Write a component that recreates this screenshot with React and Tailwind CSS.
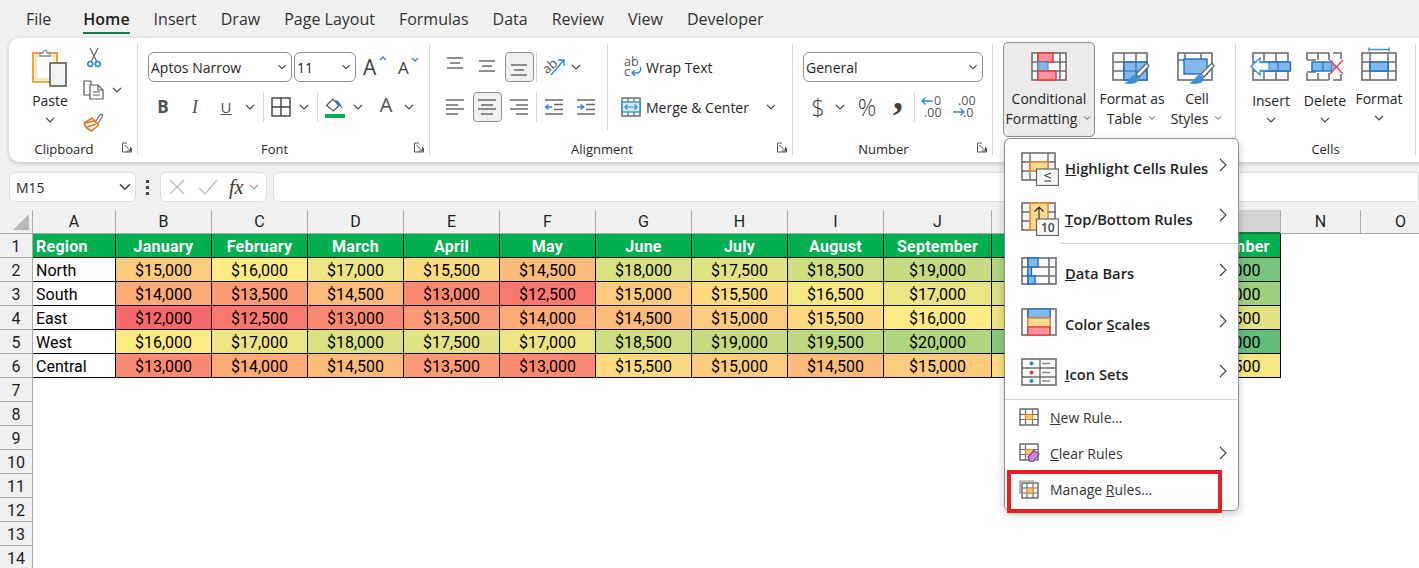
import React from "react";

const TABS = ["File", "Home", "Insert", "Draw", "Page Layout", "Formulas", "Data", "Review", "View", "Developer"];

const COLUMNS = [
  { id: "A", cls: "w-[83px]" },
  { id: "B", cls: "w-[96px]" },
  { id: "C", cls: "w-[96px]" },
  { id: "D", cls: "w-[96px]" },
  { id: "E", cls: "w-[96px]" },
  { id: "F", cls: "w-[96px]" },
  { id: "G", cls: "w-[96px]" },
  { id: "H", cls: "w-[96px]" },
  { id: "I", cls: "w-[96px]" },
  { id: "J", cls: "w-[108px]" },
  { id: "K", cls: "w-[96px]" },
  { id: "L", cls: "w-[96px]" },
  { id: "M", cls: "w-[97px]" },
  { id: "N", cls: "w-[80px]" },
  { id: "O", cls: "w-[80px]" },
];

const HEADERS = ["Region", "January", "February", "March", "April", "May", "June", "July", "August", "September", "October", "November", "December"];

const ROWS = [
  ["North", 15000, 16000, 17000, 15500, 14500, 18000, 17500, 18500, 19000, 20000, 21500, 23000],
  ["South", 14000, 13500, 14500, 13000, 12500, 15000, 15500, 16500, 17000, 18000, 19500, 21000],
  ["East", 12000, 12500, 13000, 13500, 14000, 14500, 15000, 15500, 16000, 17000, 16500, 17500],
  ["West", 16000, 17000, 18000, 17500, 17000, 18500, 19000, 19500, 20000, 22000, 23500, 24000],
  ["Central", 13000, 14000, 14500, 13500, 13000, 15500, 15000, 14500, 15000, 15500, 16000, 16500],
];

// three colour scale, same stops as the sheet: 12000 red, 16000 yellow, 24000 green
function scaleColor(v) {
  const low = [248, 105, 107], mid = [255, 235, 132], high = [99, 190, 123];
  const [a, b, t] = v <= 16000 ? [low, mid, (v - 12000) / 4000] : [mid, high, (v - 16000) / 8000];
  return `rgb(${a.map((c, i) => Math.round(c + (b[i] - c) * t)).join(",")})`;
}

const GRAY = "#6e6e6e";

function Chevron({ className = "" }) {
  return (
    <svg className={`shrink-0 ${className}`} width="10" height="6" viewBox="0 0 10 6" fill="none" stroke="#404040" strokeWidth="1.2">
      <polyline points="1,0.8 5,4.8 9,0.8" />
    </svg>
  );
}

function Launcher() {
  return (
    <svg width="11" height="11" viewBox="0 0 11 11" fill="none" stroke="#555" strokeWidth="1">
      <polyline points="5,1 0.5,1 0.5,10 9.5,10 9.5,6" />
      <polyline points="2.5,3 8.5,9" />
      <polyline points="4.5,9 8.5,9 8.5,5" />
    </svg>
  );
}

function Grid({ w = 36, h = 29, xs = [], ys = [], children }) {
  return (
    <svg width={w} height={h} viewBox={`0 0 ${w} ${h}`} fill="none" className="shrink-0">
      <rect x="1" y="1" width={w - 2} height={h - 2} fill="#fafafa" stroke={GRAY} strokeWidth="1.6" />
      {xs.map(x => <line key={x} x1={x} x2={x} y1="1" y2={h - 1} stroke={GRAY} strokeWidth="1.6" />)}
      {ys.map(y => <line key={y} y1={y} y2={y} x1="1" x2={w - 1} stroke={GRAY} strokeWidth="1.6" />)}
      {children}
    </svg>
  );
}

function Brush() {
  return (
    <g>
      <path d="M37 14 L27 25 L24 22 L35 11 Z" fill="#fff" stroke="#666" strokeWidth="1.3" />
      <path d="M23 23 C18 23 19 29 12 31 C18 33 27 32 27 26 Z" fill="#3d8fd6" />
    </g>
  );
}

function CfIcon() {
  return (
    <Grid w={36} h={29} xs={[7, 29]} ys={[10, 19]}>
      <rect x="7" y="1" width="15" height="9" fill="#ff919b" stroke="#e03c3c" strokeWidth="1.5" />
      <rect x="7" y="10" width="10" height="9" fill="#84b8ea" stroke="#3c86d0" strokeWidth="1" />
      <rect x="7" y="19" width="18" height="9" fill="#ff919b" stroke="#e03c3c" strokeWidth="1.5" />
    </Grid>
  );
}

function FormatTableIcon() {
  return (
    <svg width="40" height="34" viewBox="0 0 40 34" fill="none">
      <rect x="1" y="1" width="34" height="27" fill="#fafafa" stroke={GRAY} strokeWidth="1.6" />
      <path d="M12 1V28M24 1V28M1 10H35M1 19H35" stroke={GRAY} strokeWidth="1.5" />
      <rect x="12" y="10" width="23" height="18" fill="#84b8ea" stroke="#1b6ec2" strokeWidth="1.4" />
      <path d="M24 10V28M12 19H35" stroke="#1b6ec2" strokeWidth="1" />
      <Brush />
    </svg>
  );
}

function CellStylesIcon() {
  return (
    <svg width="40" height="34" viewBox="0 0 40 34" fill="none">
      <rect x="1" y="1" width="34" height="27" fill="#fafafa" stroke={GRAY} strokeWidth="1.6" />
      <path d="M8 1V8M24 1V8M1 8H8" stroke={GRAY} strokeWidth="1.5" />
      <rect x="7" y="7" width="23" height="15" fill="#84b8ea" stroke="#1b6ec2" strokeWidth="1.4" />
      <Brush />
    </svg>
  );
}

function InsertIcon() {
  return (
    <svg width="42" height="29" viewBox="0 0 42 29" fill="none">
      <rect x="3" y="1" width="35" height="27" fill="#fafafa" stroke={GRAY} strokeWidth="1.6" />
      <path d="M14 1V28M26 1V28M3 10H38M3 19H38" stroke={GRAY} strokeWidth="1.5" />
      <rect x="16" y="10" width="24.5" height="9" fill="#84b8ea" stroke="#1b6ec2" strokeWidth="1.4" />
      <line x1="28" x2="28" y1="10" y2="19" stroke="#1b6ec2" />
      <path d="M1 14.5 L10 6 V10.5 H19 V18.5 H10 V23 Z" fill="#fff" stroke="#3c96d8" strokeWidth="1.3" />
    </svg>
  );
}

function DeleteIcon() {
  return (
    <svg width="38" height="29" viewBox="0 0 38 29" fill="none">
      <path d="M1 8V1H23M1 21V28H23M12 1V8M12 21V28M1 8H10M1 20H10M23 1V8M23 21V28M27 1H35V7M27 28H35V22" stroke={GRAY} strokeWidth="1.6" />
      <rect x="6" y="10" width="20" height="9" fill="#84b8ea" stroke="#1b6ec2" strokeWidth="1.4" />
      <line x1="17" x2="17" y1="10" y2="19" stroke="#1b6ec2" />
      <path d="M26 9.5 L31 14.5 L26 19.5" fill="#84b8ea" />
      <path d="M24 8 L37 22M37 8 L24 22" stroke="#ee4b4b" strokeWidth="1.6" />
    </svg>
  );
}

function FormatIcon() {
  return (
    <svg width="36" height="35" viewBox="0 0 36 35" fill="none">
      <path d="M8 1.5V5.5M8 3.5H28M28 1.5V5.5" stroke="#3c96d8" strokeWidth="1.4" />
      <rect x="1" y="7" width="34" height="27" fill="#fafafa" stroke={GRAY} strokeWidth="1.6" />
      <path d="M9 7V34M27 7V34M1 16H35M1 25H35" stroke={GRAY} strokeWidth="1.5" />
      <rect x="9" y="16" width="18" height="9" fill="#84b8ea" stroke="#1b6ec2" strokeWidth="1.4" />
    </svg>
  );
}

function PasteIcon() {
  return (
    <svg width="36" height="40" viewBox="0 0 36 40" fill="none">
      <rect x="1" y="5" width="24" height="29" fill="#fff8ea" stroke="#f0a040" strokeWidth="2" />
      <path d="M4 8H22V31H4Z" fill="#fff" stroke="#fbd9a5" strokeWidth="1.5" />
      <path d="M8 8V5H11C11 1.5 15 1.5 15 5H18V8Z" fill="#fff" stroke="#8a8a8a" strokeWidth="1.3" />
      <rect x="18" y="15" width="16" height="23" fill="#f3f3f3" stroke="#4f4f4f" strokeWidth="1.5" />
    </svg>
  );
}

function CutIcon() {
  return (
    <svg width="14" height="21" viewBox="0 0 14 21" fill="none">
      <path d="M3 1 L9.5 14M11 1 L4.5 14" stroke="#555" strokeWidth="1.1" />
      <circle cx="3.3" cy="17" r="2.5" stroke="#2b88d8" strokeWidth="1.6" />
      <circle cx="10.7" cy="17" r="2.5" stroke="#2b88d8" strokeWidth="1.6" />
    </svg>
  );
}

function CopyIcon() {
  return (
    <svg width="21" height="20" viewBox="0 0 21 20" fill="none" stroke="#5c5c5c" strokeWidth="1.2">
      <path d="M1 1H8V15H1Z" fill="#fff" />
      <path d="M7 5H15L20 10V19H7Z" fill="#fff" />
      <path d="M15 5V10H20M10 12H17M10 15H17" />
    </svg>
  );
}

function PainterIcon() {
  return (
    <svg width="21" height="20" viewBox="0 0 21 20" fill="none">
      <path d="M12 10 L17 3 C18 1.5 20.5 3 19.5 4.5 L14.5 12" fill="#fff" stroke="#6b6b6b" strokeWidth="1.2" />
      <path d="M9 6 L15.5 13 L9 19 C6 18 2 15 1 11 Z" fill="#fff" stroke="#e5761d" strokeWidth="1.5" />
      <path d="M2 11 L11 9M4 15 L13 12" stroke="#e5761d" strokeWidth="1.4" />
    </svg>
  );
}

function Bars({ lines, w = 18, h = 14, color = "#5f5f5f" }) {
  return (
    <svg width={w} height={h} viewBox={`0 0 ${w} ${h}`} fill="none" stroke={color} strokeWidth="1.4" className="shrink-0">
      {lines.map(([x1, x2, y]) => <line key={y} x1={x1} x2={x2} y1={y} y2={y} />)}
    </svg>
  );
}

function Indent({ right }) {
  return (
    <svg width="18" height="16" viewBox="0 0 18 16" fill="none">
      <path d="M0 1H18M0 15H18M9 5.5H18M9 10.5H18" stroke="#6a6a6a" strokeWidth="1.4" />
      <path d={right ? "M0 8H6M3.5 5.5L6.5 8L3.5 10.5" : "M7 8H1M3.5 5.5L0.5 8L3.5 10.5"} stroke="#2b88d8" strokeWidth="1.5" />
    </svg>
  );
}

function OrientIcon() {
  return (
    <svg className="overflow-visible" width="21" height="20" viewBox="0 0 21 20" fill="none">
      <text x="-2" y="13" fontSize="13" fontFamily="Open Sans" fill="#555" transform="rotate(-42 6 10)">ab</text>
      <path d="M6 18 L19 3M13 3H19V9" stroke="#2b88d8" strokeWidth="1.4" />
    </svg>
  );
}

function WrapIcon() {
  return (
    <svg className="overflow-visible" width="18" height="20" viewBox="0 0 18 20" fill="none">
      <text x="0" y="9" fontSize="12.5" fontFamily="Open Sans" fill="#555">ab</text>
      <text x="0" y="19" fontSize="12.5" fontFamily="Open Sans" fill="#555">c</text>
      <path d="M16 10 C18 12 16 16 13 16 H8M11 13 L8 16 L11 19" stroke="#2b88d8" strokeWidth="1.3" />
    </svg>
  );
}

function MergeIcon() {
  return (
    <svg width="20" height="20" viewBox="0 0 20 20" fill="none">
      <rect x="1" y="1" width="18" height="18" fill="#fff" stroke={GRAY} strokeWidth="1.5" />
      <path d="M7 1V5M13 1V5M7 15V19M13 15V19" stroke={GRAY} strokeWidth="1.3" />
      <rect x="1" y="5" width="18" height="10" fill="#d6e8f8" stroke="#2b88d8" strokeWidth="1.3" />
      <path d="M4 10H16M6.5 7.5L4 10L6.5 12.5M13.5 7.5L16 10L13.5 12.5" stroke="#2b88d8" strokeWidth="1.2" />
    </svg>
  );
}

function BordersIcon() {
  return (
    <svg width="20" height="20" viewBox="0 0 20 20" fill="none" stroke="#3f3f3f" strokeWidth="1.4">
      <rect x="1" y="1" width="18" height="18" />
      <path d="M10 1V19M1 10H19" />
    </svg>
  );
}

function FillIcon() {
  return (
    <svg width="20" height="21" viewBox="0 0 20 21" fill="none">
      <path d="M1.5 8.5 L8 2 L14 8.5 L8.5 14 Z" fill="#fff" stroke="#555" strokeWidth="1.2" />
      <path d="M10 3 C13 3 15 6 16 8 C17 10 18 11 17.5 12 L15 9 L13 8Z" fill="#2b6fb5" />
      <rect x="0" y="17" width="20" height="4" fill="#00b050" />
    </svg>
  );
}

function DecimalIcon({ more }) {
  return (
    <svg className="overflow-visible" width="22" height="24" viewBox="0 0 22 24" fill="none">
      <text x={more ? 13 : 5} y="10" fontSize="12.5" fontFamily="Open Sans" fill="#555">{more ? "0" : ".00"}</text>
      <text x={more ? 3 : 10} y="22" fontSize="12.5" fontFamily="Open Sans" fill="#555">{more ? ".00" : ".0"}</text>
      <path d={more ? "M1 6H12M4.5 2.5L1 6L4.5 9.5" : "M0 17H11M7.5 13.5L11 17L7.5 20.5"} stroke="#2b88d8" strokeWidth="1.3" />
    </svg>
  );
}

// menu icons
function HighlightIcon() {
  return (
    <svg width="38" height="34" viewBox="0 0 38 34" fill="none">
      <rect x="1" y="1" width="33" height="27" fill="#fafafa" stroke={GRAY} strokeWidth="1.6" />
      <path d="M9 1V28M27 1V28M1 10H35M1 19H35" stroke={GRAY} strokeWidth="1.4" />
      <rect x="9" y="10" width="18" height="9" fill="#fbd98f" stroke="#e8862d" strokeWidth="1.5" />
      <rect x="15.5" y="17" width="22" height="16.5" fill="#f7f7f7" stroke="#666" strokeWidth="1.2" />
      <path d="M30 21 L23.5 23.5 L30 26M23.5 29H30" stroke="#333" strokeWidth="1" />
    </svg>
  );
}

function TopBottomIcon() {
  return (
    <svg width="38" height="34" viewBox="0 0 38 34" fill="none">
      <rect x="1" y="1" width="33" height="27" fill="#fafafa" stroke={GRAY} strokeWidth="1.6" />
      <path d="M1 10H35M1 19H35" stroke={GRAY} strokeWidth="1.4" />
      <rect x="9" y="1" width="18" height="27" fill="#fbd98f" stroke="#e8862d" strokeWidth="1.5" />
      <path d="M18 17V5M13.5 9.5L18 5L22.5 9.5" stroke="#333" strokeWidth="1.2" />
      <rect x="15.5" y="17" width="22" height="16.5" fill="#f7f7f7" stroke="#666" strokeWidth="1.2" />
      <text x="20" y="30" fontSize="12" fontFamily="Open Sans" fill="#444">10</text>
    </svg>
  );
}

function DataBarsIcon() {
  return (
    <Grid w={36} h={28} xs={[7, 28]} ys={[10, 19]}>
      <rect x="7" y="1" width="10" height="9" fill="#84b8ea" stroke="#1b6ec2" strokeWidth="1.4" />
      <rect x="7" y="10" width="3.5" height="9" fill="#84b8ea" stroke="#1b6ec2" strokeWidth="1.2" />
      <rect x="7" y="19" width="7" height="8" fill="#84b8ea" stroke="#1b6ec2" strokeWidth="1.4" />
    </Grid>
  );
}

function ColorScalesIcon() {
  return (
    <Grid w={36} h={28}>
      <path d="M7 1V27M29 1V27" stroke={GRAY} strokeWidth="1.4" />
      <rect x="7" y="1" width="22" height="9" fill="#84b8ea" stroke="#1b6ec2" strokeWidth="1.3" />
      <rect x="7" y="10" width="22" height="9" fill="#fbd98f" stroke="#e8862d" strokeWidth="1.3" />
      <rect x="7" y="19" width="22" height="8" fill="#ff919b" stroke="#e03c3c" strokeWidth="1.3" />
    </Grid>
  );
}

function IconSetsIcon() {
  return (
    <Grid w={36} h={28} ys={[10, 19]}>
      <path d="M19 1V27" stroke={GRAY} strokeWidth="1.4" />
      <circle cx="10.5" cy="5.5" r="2" fill="#2b88d8" />
      <circle cx="10.5" cy="14.5" r="2" fill="#e8383c" />
      <circle cx="10.5" cy="23" r="2" fill="#2b88d8" />
      <path d="M21 5.5H29M21 14.5H29M21 23H29" stroke="#8a8a8a" strokeWidth="1.3" />
    </Grid>
  );
}

function NewRuleIcon() {
  return (
    <svg width="20" height="18" viewBox="0 0 20 18" fill="none">
      <rect x="1" y="1" width="18" height="16" fill="#fafafa" stroke={GRAY} strokeWidth="1.5" />
      <path d="M6.5 1V17M13.5 1V17M1 6.5H19M1 11.5H19" stroke={GRAY} strokeWidth="1.2" />
      <rect x="6.5" y="6.5" width="7" height="5" fill="#fbc66f" stroke="#e8862d" />
    </svg>
  );
}

function ClearRulesIcon() {
  return (
    <svg width="21" height="20" viewBox="0 0 21 20" fill="none">
      <rect x="1" y="1" width="18" height="16" fill="#fafafa" stroke={GRAY} strokeWidth="1.5" />
      <path d="M6.5 1V17M1 6.5H19M1 11.5H12" stroke={GRAY} strokeWidth="1.2" />
      <rect x="6.5" y="6.5" width="7" height="5" fill="#fbc66f" stroke="#e8862d" />
      <path d="M9 14 L15 7.5 L20 11 L14 18.5 H11 Z" fill="#c98bd6" stroke="#8e3aa5" strokeWidth="1.2" />
    </svg>
  );
}

function ManageRulesIcon() {
  return (
    <svg width="20" height="19" viewBox="0 0 20 19" fill="none">
      <path d="M1 14V1H15" stroke="#888" strokeWidth="1.2" />
      <rect x="3" y="3" width="16" height="15" fill="#fafafa" stroke={GRAY} strokeWidth="1.5" />
      <path d="M8 3V18M14 3V18M3 8H19M3 13H19" stroke={GRAY} strokeWidth="1.2" />
      <rect x="8" y="8" width="6" height="5" fill="#fbc66f" stroke="#e8862d" />
    </svg>
  );
}

function MenuArrow({ className = "" }) {
  return (
    <svg className={`ml-auto mr-[11px] shrink-0 ${className}`} width="8" height="14" viewBox="0 0 8 14" fill="none" stroke="#404040" strokeWidth="1.1">
      <polyline points="1,1 7,7 1,13" />
    </svg>
  );
}

function Group({ width, label, launcher = true, children }) {
  return (
    <section className={`${width} h-[111px] shrink-0 flex flex-col border-r border-[#d6d6d6]`}>
      <div className="h-[97px]">{children}</div>
      <div className="flex h-[14px] items-start">
        <div className="flex-1 text-center text-[13px] leading-[16px] text-[#262626]">{label}</div>
        {launcher && <div className="w-[18px] pl-[3px] pt-px shrink-0"><Launcher /></div>}
      </div>
    </section>
  );
}

function Dropdown({ width, text }) {
  return (
    <div className={`${width} h-[30px] shrink-0 flex items-center justify-between rounded-[6px] border border-[#8f8f8f] bg-white pl-[2px] pr-[4px] text-[14px] text-[#262626]`}>
      <span>{text}</span>
      <Chevron className="scale-90" />
    </div>
  );
}

function VSep({ className = "" }) {
  return <div className={`w-px h-[30px] shrink-0 bg-[#d6d6d6] ${className}`} />;
}

function Slot({ width, active, children }) {
  return (
    <div className={`${width} h-[30px] shrink-0 flex items-center justify-center`}>
      {active
        ? <div className="w-[29px] h-[30px] flex items-center justify-center rounded-[4px] border border-[#8f8f8f] bg-[#f0f0f0]">{children}</div>
        : children}
    </div>
  );
}

function BigButton({ width, icon, lines, active, arrowBelow, textTop = "mt-[8px]" }) {
  return (
    <div className={`${width} shrink-0 flex flex-col items-center text-[14px] leading-[19.5px] text-[#262626]
      ${active ? "h-[95px] -mt-[2px] pt-[9px] rounded-[5px] border border-[#8f8f8f] bg-[#ebebeb]" : "pt-[8px]"}`}>
      {icon}
      <div className={`${textTop} flex flex-col items-center whitespace-nowrap`}>
        {lines.map((l, i) => (
          <div key={l} className="flex items-center">
            {l}
            {i === lines.length - 1 && !arrowBelow && <Chevron className="ml-[5px] scale-75" />}
          </div>
        ))}
        {arrowBelow && <Chevron className="mt-[6px]" />}
      </div>
    </div>
  );
}

function Ribbon() {
  return (
    <div className="mx-[9px] w-[1420px] h-[124px] flex pt-[6px] rounded-l-[10px] bg-white shadow-[0_1px_4px_rgba(0,0,0,0.22)]">
      <Group width="w-[129px]" label="Clipboard">
        <div className="flex">
          <div className="ml-[17px] w-[48px] pt-[4px] flex flex-col items-center text-[14px] text-[#262626]">
            <PasteIcon />
            <div className="mt-[3px] leading-[20px]">Paste</div>
            <Chevron className="mt-[6px]" />
          </div>
          <div className="ml-[9px] pt-[3px] flex flex-col gap-[12px]">
            <div className="pl-[4px] h-[21px]"><CutIcon /></div>
            <div className="flex items-center h-[20px]"><CopyIcon /><Chevron className="ml-[8px]" /></div>
            <div className="h-[20px]"><PainterIcon /></div>
          </div>
        </div>
      </Group>

      <Group width="w-[292px]" label="Font">
        <div className="pt-[8px] flex flex-col gap-[10px]">
          <div className="flex items-center pl-[10px]">
            <Dropdown width="w-[144px]" text="Aptos Narrow" />
            <Dropdown width="w-[62px] ml-[2px]" text="11" />
            <div className="ml-[7px] relative w-[22px] text-[21px] leading-none text-[#404040]">
              A
              <svg className="absolute right-[-2px] top-[-1px]" width="8" height="5" viewBox="0 0 8 5" fill="none" stroke="#2b88d8" strokeWidth="1.3"><polyline points="1,4 4,1 7,4" /></svg>
            </div>
            <div className="ml-[13px] relative w-[18px] text-[17px] leading-none text-[#404040]">
              A
              <svg className="absolute right-[-3px] top-[-2px]" width="8" height="5" viewBox="0 0 8 5" fill="none" stroke="#2b88d8" strokeWidth="1.3"><polyline points="1,1 4,4 7,1" /></svg>
            </div>
          </div>
          <div className="flex items-center pl-[9px]">
            <Slot width="w-[32px]"><span className="text-[17px] font-bold text-[#505050]">B</span></Slot>
            <Slot width="w-[32px]"><span className="font-['Liberation_Serif',serif] text-[18px] italic text-[#505050]">I</span></Slot>
            <Slot width="w-[30px]"><span className="text-[15px] underline text-[#505050]">U</span></Slot>
            <Slot width="w-[18px]"><Chevron /></Slot>
            <VSep className="ml-[4px]" />
            <div className="ml-[7px]"><BordersIcon /></div>
            <Slot width="w-[18px] ml-[4px]"><Chevron /></Slot>
            <VSep className="ml-[4px]" />
            <div className="ml-[7px]"><FillIcon /></div>
            <Slot width="w-[18px] ml-[4px]"><Chevron /></Slot>
            <Slot width="w-[20px] ml-[9px]"><span className="text-[20px] text-[#505050] -mt-[4px]">A</span></Slot>
            <Slot width="w-[18px] ml-[4px]"><Chevron /></Slot>
          </div>
        </div>
      </Group>

      <Group width="w-[363px]" label="Alignment">
        <div className="flex">
          <div className="w-[178px] h-[86px] pt-[8px] pl-[9px] flex flex-col gap-[10px] border-r border-[#d6d6d6]">
            <div className="flex items-center">
              <Slot width="w-[32px]"><div className="-mt-[6px]"><Bars lines={[[1, 17, 1], [4, 14, 6], [1, 17, 11]]} /></div></Slot>
              <Slot width="w-[32px]"><Bars lines={[[1, 17, 1], [4, 14, 6], [1, 17, 11]]} /></Slot>
              <Slot width="w-[32px]" active><div className="mt-[8px]"><Bars lines={[[1, 17, 1], [4, 14, 6], [1, 17, 11]]} /></div></Slot>
              <VSep className="ml-[1px]" />
              <div className="ml-[8px]"><OrientIcon /></div>
              <Slot width="w-[18px] ml-[1px]"><Chevron /></Slot>
            </div>
            <div className="flex items-center">
              <Slot width="w-[32px]"><Bars h={16} lines={[[0, 18, 1], [0, 12, 6], [0, 18, 10], [0, 12, 15]]} /></Slot>
              <Slot width="w-[32px]" active><Bars h={16} lines={[[0, 18, 1], [3, 15, 6], [0, 18, 10], [3, 15, 15]]} /></Slot>
              <Slot width="w-[32px]"><Bars h={16} lines={[[0, 18, 1], [6, 18, 6], [0, 18, 10], [6, 18, 15]]} /></Slot>
              <VSep className="ml-[1px]" />
              <div className="ml-[8px]"><Indent /></div>
              <div className="ml-[14px]"><Indent right /></div>
            </div>
          </div>
          <div className="pt-[8px] pl-[13px] flex flex-col gap-[10px] text-[14px] text-[#262626]">
            <div className="h-[30px] flex items-center">
              <div className="w-[25px] pl-[3px]"><WrapIcon /></div>
              Wrap Text
            </div>
            <div className="h-[30px] flex items-center">
              <div className="w-[25px]"><MergeIcon /></div>
              Merge &amp; Center
              <Chevron className="ml-[17px]" />
            </div>
          </div>
        </div>
      </Group>

      <Group width="w-[200px]" label="Number">
        <div className="pt-[8px] flex flex-col gap-[10px]">
          <div className="pl-[10px]"><Dropdown width="w-[180px]" text="General" /></div>
          <div className="flex items-center pl-[15px] text-[#404040]">
            <Slot width="w-[20px]"><span className="text-[23px] font-light">$</span></Slot>
            <Slot width="w-[18px] ml-[3px]"><Chevron /></Slot>
            <Slot width="w-[22px] ml-[7px]"><span className="text-[23px] font-light">%</span></Slot>
            <Slot width="w-[12px] ml-[14px]"><span className="font-['Liberation_Serif',serif] text-[40px] leading-none font-bold -mt-[22px]">,</span></Slot>
            <VSep className="ml-[10px]" />
            <div className="ml-[6px]"><DecimalIcon more /></div>
            <div className="ml-[10px]"><DecimalIcon /></div>
          </div>
        </div>
      </Group>

      <Group width="w-[243px]" label="Styles" launcher={false}>
        <div className="flex pl-[10px]">
          <BigButton width="w-[92px]" active icon={<CfIcon />} lines={["Conditional", "Formatting"]} />
          <BigButton width="w-[68px] ml-[3px]" icon={<FormatTableIcon />} lines={["Format as", "Table"]} textTop="mt-[3px]" />
          <BigButton width="w-[62px]" icon={<CellStylesIcon />} lines={["Cell", "Styles"]} textTop="mt-[3px]" />
        </div>
      </Group>

      <Group width="w-[180px]" label="Cells" launcher={false}>
        <div className="flex pl-[9px]">
          <BigButton width="w-[52px]" icon={<InsertIcon />} lines={["Insert"]} arrowBelow textTop="mt-[10px]" />
          <BigButton width="w-[56px]" icon={<DeleteIcon />} lines={["Delete"]} arrowBelow textTop="mt-[10px]" />
          <div className="w-[52px] -mt-[6px]">
            <BigButton width="w-[52px]" icon={<FormatIcon />} lines={["Format"]} arrowBelow textTop="mt-[8px]" />
          </div>
        </div>
      </Group>
    </div>
  );
}

function FormulaBar() {
  return (
    <div className="mt-[10px] h-[30px] flex items-center pl-[9px]">
      <div className="w-[127px] h-[30px] flex items-center justify-between rounded-[6px] border border-[#dcdcdc] bg-white pl-[6px] pr-[5px] text-[14px] text-[#262626]">
        M15
        <Chevron className="scale-125" />
      </div>
      <div className="ml-[10px] w-[4px] flex flex-col gap-[3px]">
        <div className="w-[3px] h-[3px] bg-[#444]" />
        <div className="w-[3px] h-[3px] bg-[#444]" />
        <div className="w-[3px] h-[3px] bg-[#444]" />
      </div>
      <div className="ml-[10px] w-[107px] h-[30px] flex items-center rounded-[6px] border border-[#dcdcdc] bg-white pl-[8px]">
        <svg width="16" height="16" viewBox="0 0 16 16" fill="none" stroke="#bdbdbd" strokeWidth="1.3"><path d="M1 1L15 15M15 1L1 15" /></svg>
        <svg className="ml-[13px]" width="20" height="16" viewBox="0 0 20 16" fill="none" stroke="#bdbdbd" strokeWidth="1.3"><path d="M1 9L7 15L19 1" /></svg>
        <span className="ml-[11px] font-['Liberation_Serif',serif] italic text-[20px] leading-none text-[#333]">fx</span>
        <Chevron className="ml-[6px] opacity-50" />
      </div>
      <div className="ml-[6px] flex-1 h-[30px] rounded-l-[6px] border border-[#dcdcdc] bg-white" />
    </div>
  );
}

function RowHead({ n }) {
  return (
    <div className="w-[33px] h-6 shrink-0 flex items-center justify-center pt-[2px] border-r border-b border-[#ababab] bg-[#f0f0f0] text-[16px] text-[#1f1f1f]">
      {n}
    </div>
  );
}

function Sheet() {
  return (
    <div className="mt-[8px] font-['Roboto',sans-serif] text-[16px]">
      <div className="flex h-6">
        <div className="w-[33px] shrink-0 flex items-end justify-end border-r border-b border-[#ababab] bg-[#f0f0f0] pr-[3px] pb-[3px]">
          <div className="w-[16px] h-[16px] bg-[#b9b9b9] [clip-path:polygon(100%_0,100%_100%,0_100%)]" />
        </div>
        {COLUMNS.map(c => (
          <div key={c.id} className={`${c.cls} shrink-0 flex items-center justify-center border-r border-b border-[#ababab] text-[#1f1f1f]
            ${c.id === "M" ? "bg-[#d2d2d2] border-b-2 border-b-[#107c41]" : "bg-[#f0f0f0]"}`}>
            {c.id}
          </div>
        ))}
      </div>

      <div className="bg-white">
        <div className="flex">
          <RowHead n={1} />
          {HEADERS.map((h, i) => (
            <div key={h} className={`${COLUMNS[i].cls} h-6 shrink-0 flex items-center pt-[2px] border-r border-b border-black bg-[#00b050] font-bold tracking-[0.25px] text-white
              ${i === 0 ? "pl-[3px]" : "justify-center"}`}>
              {h}
            </div>
          ))}
        </div>

        {ROWS.map((row, r) => (
          <div key={row[0]} className="flex">
            <RowHead n={r + 2} />
            {row.map((v, i) => (
              typeof v === "string"
                ? <div key={i} className={`${COLUMNS[i].cls} h-6 shrink-0 flex items-center pt-[2px] pl-[3px] border-r border-b border-black text-black`}>{v}</div>
                : <div key={i} style={{ backgroundColor: scaleColor(v) }} className={`${COLUMNS[i].cls} h-6 shrink-0 flex items-center justify-center pt-[2px] border-r border-b border-black text-black`}>
                    ${v.toLocaleString("en-US")}
                  </div>
            ))}
          </div>
        ))}

        {[7, 8, 9, 10, 11, 12, 13, 14].map(n => <RowHead key={n} n={n} />)}
      </div>
    </div>
  );
}

function CfMenu() {
  const big = "flex items-center pl-[16px] font-semibold text-[14.7px] text-[#1f1f1f]";
  const small = "h-[36px] flex items-center pl-[14px] pb-[2px] text-[14px] text-[#333]";
  return (
    <div className="absolute left-[1004px] top-[138px] w-[235px] h-[373px] pt-[4px] rounded-[6px] border border-[#8f8f8f] bg-white shadow-[0_3px_8px_rgba(0,0,0,0.22)]">
      <div className={`${big} h-[51px]`}>
        <HighlightIcon />
        <span className="ml-[6px]"><u>H</u>ighlight Cells Rules</span>
        <MenuArrow className="mb-[8px]" />
      </div>
      <div className={`${big} h-[49px]`}>
        <TopBottomIcon />
        <span className="ml-[6px] mt-[1px]"><u>T</u>op/Bottom Rules</span>
        <MenuArrow className="mb-[8px]" />
      </div>
      <div className="ml-[55px] h-px bg-[#d6d6d6]" />
      <div className={`${big} h-[51px] mt-[4px]`}>
        <div className="w-[38px] mb-[6px]"><DataBarsIcon /></div>
        <span className="ml-[6px]"><u>D</u>ata Bars</span>
        <MenuArrow className="mb-[8px]" />
      </div>
      <div className={`${big} h-[51px]`}>
        <div className="w-[38px] mb-[6px]"><ColorScalesIcon /></div>
        <span className="ml-[6px]">Color <u>S</u>cales</span>
        <MenuArrow className="mb-[8px]" />
      </div>
      <div className={`${big} h-[49px]`}>
        <div className="w-[38px] mb-[6px]"><IconSetsIcon /></div>
        <span className="ml-[6px]"><u>I</u>con Sets</span>
        <MenuArrow className="mb-[8px]" />
      </div>
      <div className="h-px bg-[#d6d6d6]" />
      <div className={small}>
        <NewRuleIcon />
        <span className="ml-[11px]"><u>N</u>ew Rule...</span>
      </div>
      <div className={small}>
        <ClearRulesIcon />
        <span className="ml-[10px]"><u>C</u>lear Rules</span>
        <MenuArrow />
      </div>
      <div className={small}>
        <ManageRulesIcon />
        <span className="ml-[11px]">Manage <u>R</u>ules...</span>
      </div>
    </div>
  );
}

export default function App() {
  return (
    <div className="relative w-[1419px] h-[568px] overflow-hidden bg-[#f0f0f0] font-['Open_Sans',sans-serif] text-[#262626]">
      <nav className="h-[38px] flex items-start pl-[26px] pt-[8px] gap-[24px] text-[16px] text-[#333]">
        {TABS.map(t => (
          <div key={t} className={`relative leading-[22px] whitespace-nowrap ${t === "Home" ? "font-semibold text-[#1f1f1f]" : ""} ${t === "File" ? "mr-[8px]" : ""}`}>
            {t}
            {t === "Home" && <div className="absolute left-0 right-0 top-[24px] h-[2px] bg-[#107c41]" />}
          </div>
        ))}
      </nav>
      <Ribbon />
      <FormulaBar />
      <Sheet />
      <CfMenu />
      <div className="absolute left-[1007px] top-[470px] w-[215px] h-[43px] border-4 border-[#ed1c24]" />
    </div>
  );
}
